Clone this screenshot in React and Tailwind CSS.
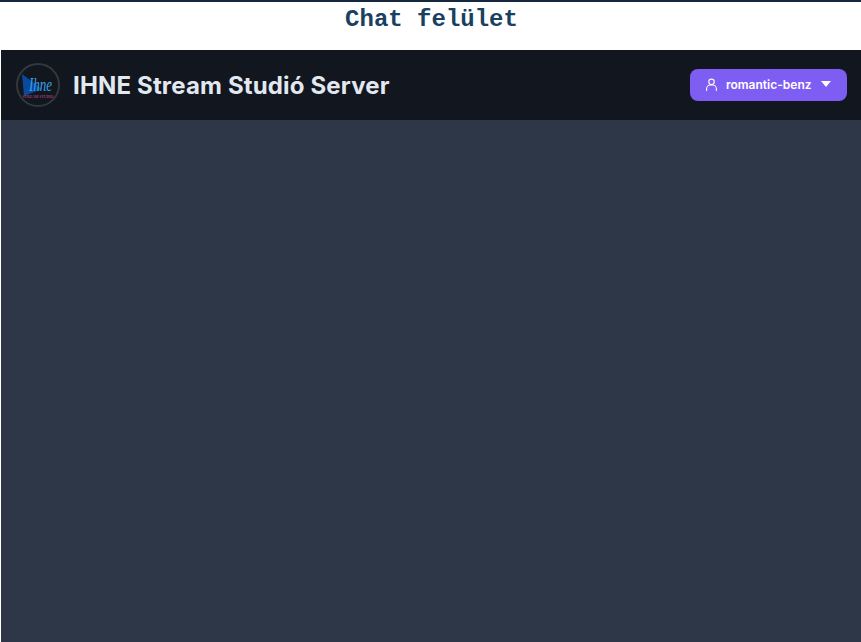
import React from 'react';

function Logo() {
  return (
    <div className="relative w-[44px] h-[44px] rounded-full border-2 border-[#33373f] bg-[#12161d] shrink-0">
      <svg className="absolute inset-0 overflow-visible" width="40" height="40" viewBox="0 0 40 40">
        <path d="M4 9 L24 24 L6 31 Z" fill="#0a4a9c" />
        <text x="11" y="26" fontSize="18" fontStyle="italic" fontFamily="Liberation Serif, serif" fill="#3aa0e6" textLength="23" lengthAdjust="spacingAndGlyphs">Ihne</text>
        <text x="20" y="33" textAnchor="middle" fontSize="4.4" fontWeight="700" fontFamily="Liberation Serif, serif" fill="#a03a7a" textLength="31" lengthAdjust="spacingAndGlyphs">STREAM STUDIO</text>
      </svg>
    </div>
  );
}

export default function App() {
  return (
    <div className="h-[642px] bg-white overflow-hidden">
      <div className="h-[2px] bg-[#16283f]" />
      <h1 className="h-[48px] pt-[4px] pl-[2px] text-center text-[24px] leading-[27px] font-bold text-[#1a4060] font-['Liberation_Mono',monospace]">
        Chat felület
      </h1>
      <div className="ml-[1px] h-[592px] flex flex-col bg-[#2d3748]">
        <header className="h-[70px] flex items-center justify-between pl-[15px] pr-[14px] bg-[#12161f]">
          <div className="flex items-center gap-[13px]">
            <Logo />
            <span className="pt-[2px] text-[24px] font-bold tracking-[0.16px] text-[#e2e8f0] font-['Inter',sans-serif]">
              IHNE Stream Studió Server
            </span>
          </div>
          <button
            type="button"
            className="w-[157px] h-[32px] flex items-center pl-[15px] rounded-lg bg-[#7e5ef2] text-white text-[12px] font-semibold font-['Inter',sans-serif]"
          >
            <svg width="13" height="13" className="mb-[2px]" viewBox="0 0 24 24" fill="none" stroke="currentColor" strokeWidth="2" strokeLinecap="round" strokeLinejoin="round">
              <circle cx="12" cy="7" r="5" />
              <path d="M3 23 v-3 a7 7 0 0 1 7 -7 h4 a7 7 0 0 1 7 7 v3" />
            </svg>
            <span className="ml-[8px]">romantic-benz</span>
            <svg className="ml-[9px] mb-[3px]" width="10" height="6" viewBox="0 0 10 6">
              <path d="M0 0 H10 L5 6 Z" fill="currentColor" />
            </svg>
          </button>
        </header>
        <main className="flex-1" />
      </div>
    </div>
  );
}
